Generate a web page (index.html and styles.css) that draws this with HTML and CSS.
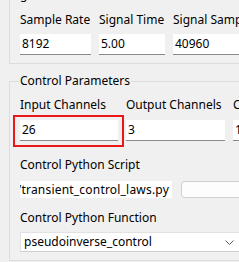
FILE: index.html
```html
<!DOCTYPE html>
<html lang="en">
<head>
    <meta charset="UTF-8">
    <meta name="viewport" content="width=device-width, initial-scale=1.0">
    <title>Control Settings</title>
    <link rel="stylesheet" href="styles.css">
</head>
<body>
    <div class="page">
        <fieldset class="group group-signal">
            <legend>generator</legend>
            <div class="row signal-row">
                <div class="cell">
                    <label>Sample Rate</label>
                    <div class="field">8192</div>
                </div>
                <div class="cell">
                    <label>Signal Time</label>
                    <div class="field">5.00</div>
                </div>
                <div class="cell">
                    <label>Signal Samples</label>
                    <div class="field">40960</div>
                </div>
            </div>
        </fieldset>

        <fieldset class="group group-control">
            <legend>Control Parameters</legend>
            <div class="row channel-row">
                <div class="cell">
                    <label>Input Channels</label>
                    <div class="field highlight">26</div>
                </div>
                <div class="cell">
                    <label>Output Channels</label>
                    <div class="field">3</div>
                </div>
                <div class="cell">
                    <label>Control Channels</label>
                    <div class="field">1</div>
                </div>
            </div>

            <div class="cell script-cell">
                <label>Control Python Script</label>
                <div class="row script-row">
                    <div class="field field-path"><span>examples/transient_control_laws.py</span></div>
                    <div class="field-button"></div>
                </div>
            </div>

            <div class="cell function-cell">
                <label>Control Python Function</label>
                <div class="combo">
                    <span>pseudoinverse_control</span>
                    <svg class="chevron" width="9" height="5" viewBox="0 0 9 5">
                        <polyline points="0.5,0.5 4.5,4.5 8.5,0.5" fill="none" stroke="#5c5c5c" stroke-width="1"/>
                    </svg>
                </div>
            </div>
        </fieldset>
    </div>
</body>
</html>
```

FILE: styles.css
```css
html, body {
    margin: 0;
    padding: 0;
}
body {
    font-family: "Noto Sans", sans-serif;
    font-size: 12px;
    color: #000;
    background-color: #f0f0f0;
    width: 239px;
    height: 262px;
    overflow: hidden;
}
.page {
    width: 340px;
    padding-left: 9px;
    margin-top: -13px;
}
.group {
    margin: 0;
    border: 1px solid #dcdcdc;
    padding: 8px 0 8px 10px;
}
.group-signal {
    padding-top: 9px;
}
.group legend {
    padding: 0 1px;
    margin-left: -1px;
    line-height: 16px;
}
.group-control {
    margin-top: 9px;
}
.row {
    display: grid;
}
.signal-row {
    grid-template-columns: 71px 66px 100px;
    column-gap: 8px;
}
.channel-row {
    grid-template-columns: 98px 99px 100px;
    column-gap: 8px;
}
.cell {
    display: flex;
    flex-direction: column;
}
.cell label {
    line-height: 16px;
    white-space: nowrap;
    margin-bottom: 6px;
}
.channel-row .cell label {
    margin-bottom: 7px;
}
.field {
    position: relative;
    height: 20px;
    line-height: 20px;
    padding: 0 2px;
    background-color: #fff;
    border-bottom: 1px solid #8a8a8a;
    white-space: nowrap;
    overflow: hidden;
}
.highlight {
    overflow: visible;
}
.highlight::after {
    content: "";
    position: absolute;
    top: -5px;
    left: -7px;
    right: -6px;
    bottom: -7px;
    border: 2px solid #e81818;
}
.script-cell {
    margin-top: 16px;
}
.script-cell label {
    margin-bottom: 8px;
}
.script-row {
    grid-template-columns: 152px 1fr;
    column-gap: 9px;
}
.field-path {
    height: 17px;
    line-height: 17px;
    border-bottom: none;
    display: flex;
    justify-content: flex-end;
    padding-right: 3px;
    letter-spacing: 0.2px;
}
.field-button {
    height: 15px;
    border: 1px solid #d0d0d0;
    border-radius: 4px;
    background-color: #fdfdfd;
}
.function-cell {
    margin-top: 12px;
}
.combo {
    width: 219px;
    height: 18px;
    line-height: 18px;
    padding-left: 3px;
    display: flex;
    align-items: center;
    justify-content: space-between;
    background-color: #fff;
    border: 1px solid #e2e2e2;
    border-bottom-color: #cfcfcf;
}
.chevron {
    margin-right: 9px;
}
```
